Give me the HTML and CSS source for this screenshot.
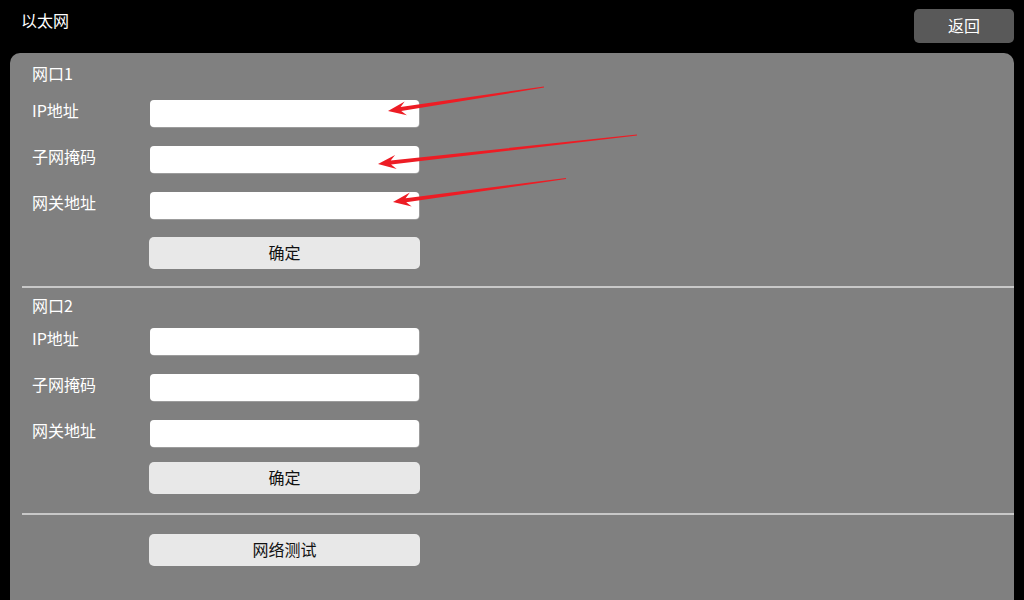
FILE: index.html
```html
<!DOCTYPE html>
<html lang="zh-CN">
<head>
    <meta charset="UTF-8">
    <meta name="viewport" content="width=device-width, initial-scale=1.0">
    <title>以太网</title>
    <link rel="stylesheet" href="styles.css">
</head>
<body>
    <div class="topbar">
        <div class="title">以太网</div>
        <button class="back-btn">返回</button>
    </div>

    <div class="panel">
        <!-- port 1 -->
        <div class="port-head">网口1</div>
        <div class="fields first">
            <div class="field"><label>IP地址</label><input type="text"></div>
            <div class="field"><label>子网掩码</label><input type="text"></div>
            <div class="field"><label>网关地址</label><input type="text"></div>
        </div>
        <button class="action-btn ok1">确定</button>

        <div class="divider d1"></div>

        <!-- port 2 -->
        <div class="port-head head2">网口2</div>
        <div class="fields second">
            <div class="field"><label>IP地址</label><input type="text"></div>
            <div class="field"><label>子网掩码</label><input type="text"></div>
            <div class="field"><label>网关地址</label><input type="text"></div>
        </div>
        <button class="action-btn ok2">确定</button>

        <div class="divider d2"></div>

        <button class="action-btn test-btn">网络测试</button>
    </div>

    <!-- annotation arrows -->
    <svg class="marks" width="1024" height="600" viewBox="0 0 1024 600">
        <polygon points="388,111 404.7,101.4 400.6,107 543.9,86.4 544.1,87.6 401.2,111 406.9,115.2"/>
        <polygon points="378,164 395.1,155 390.7,160.6 636.9,134.4 637.1,135.6 391.1,164.6 396.7,169"/>
        <polygon points="393,202 409.9,192.6 405.6,198.2 565.9,177.9 566.1,179.1 406.2,202.2 411.7,206.5"/>
    </svg>
</body>
</html>
```

FILE: styles.css
```css
body {
    margin: 0;
    padding: 0;
    background-color: #000;
    font-family: "Noto Sans CJK SC", "Noto Sans", sans-serif;
    font-size: 16px;
    position: relative;
    width: 1024px;
    height: 600px;
    overflow: hidden;
}

.topbar {
    display: flex;
    justify-content: space-between;
    align-items: flex-start;
    height: 53px;
    padding: 0 10px 0 21px;
}
.title {
    color: #fff;
    line-height: 20px;
    margin-top: 10px;
}
.back-btn {
    margin-top: 9px;
    width: 100px;
    height: 34px;
    background: #595959;
    color: #fff;
    border: none;
    border-radius: 5px;
    font-family: inherit;
    font-size: 16px;
    padding: 0 0 2px;
}

.panel {
    margin: 0 10px;
    height: 560px;
    background: #808080;
    border-radius: 10px 10px 0 0;
    padding-top: 10px;
    display: flex;
    flex-direction: column;
}

.port-head {
    color: #fff;
    line-height: 20px;
    padding-left: 22px;
}
.head2 {
    margin-top: 7px;
}

.fields {
    display: flex;
    flex-direction: column;
    gap: 19px;
    padding-left: 22px;
}
.fields.first { margin-top: 17px; }
.fields.second { margin-top: 13px; }

.field {
    display: flex;
    align-items: flex-start;
}
.field label {
    width: 118px;
    color: #fff;
    line-height: 20px;
}
.field input {
    width: 269px;
    height: 27px;
    box-sizing: border-box;
    border: none;
    border-radius: 4px;
    background: #fff;
    box-shadow: 0.5px 0.5px 0 #b8b8b8;
    outline: none;
}

.action-btn {
    margin-left: 139px;
    width: 271px;
    height: 32px;
    background: #e8e8e8;
    color: #111;
    border: none;
    border-radius: 5px;
    font-family: inherit;
    font-size: 16px;
    padding: 0 0 3px;
}
.ok1 { margin-top: 18px; }
.ok2 { margin-top: 15px; }
.test-btn { margin-top: 19px; }

.divider {
    margin-left: 12px;
    height: 2px;
    background: #c8c8c8;
}
.d1 { margin-top: 17px; }
.d2 { margin-top: 19px; }

.marks {
    position: absolute;
    top: 0;
    left: 0;
    pointer-events: none;
    fill: #ed1c24;
}
```
